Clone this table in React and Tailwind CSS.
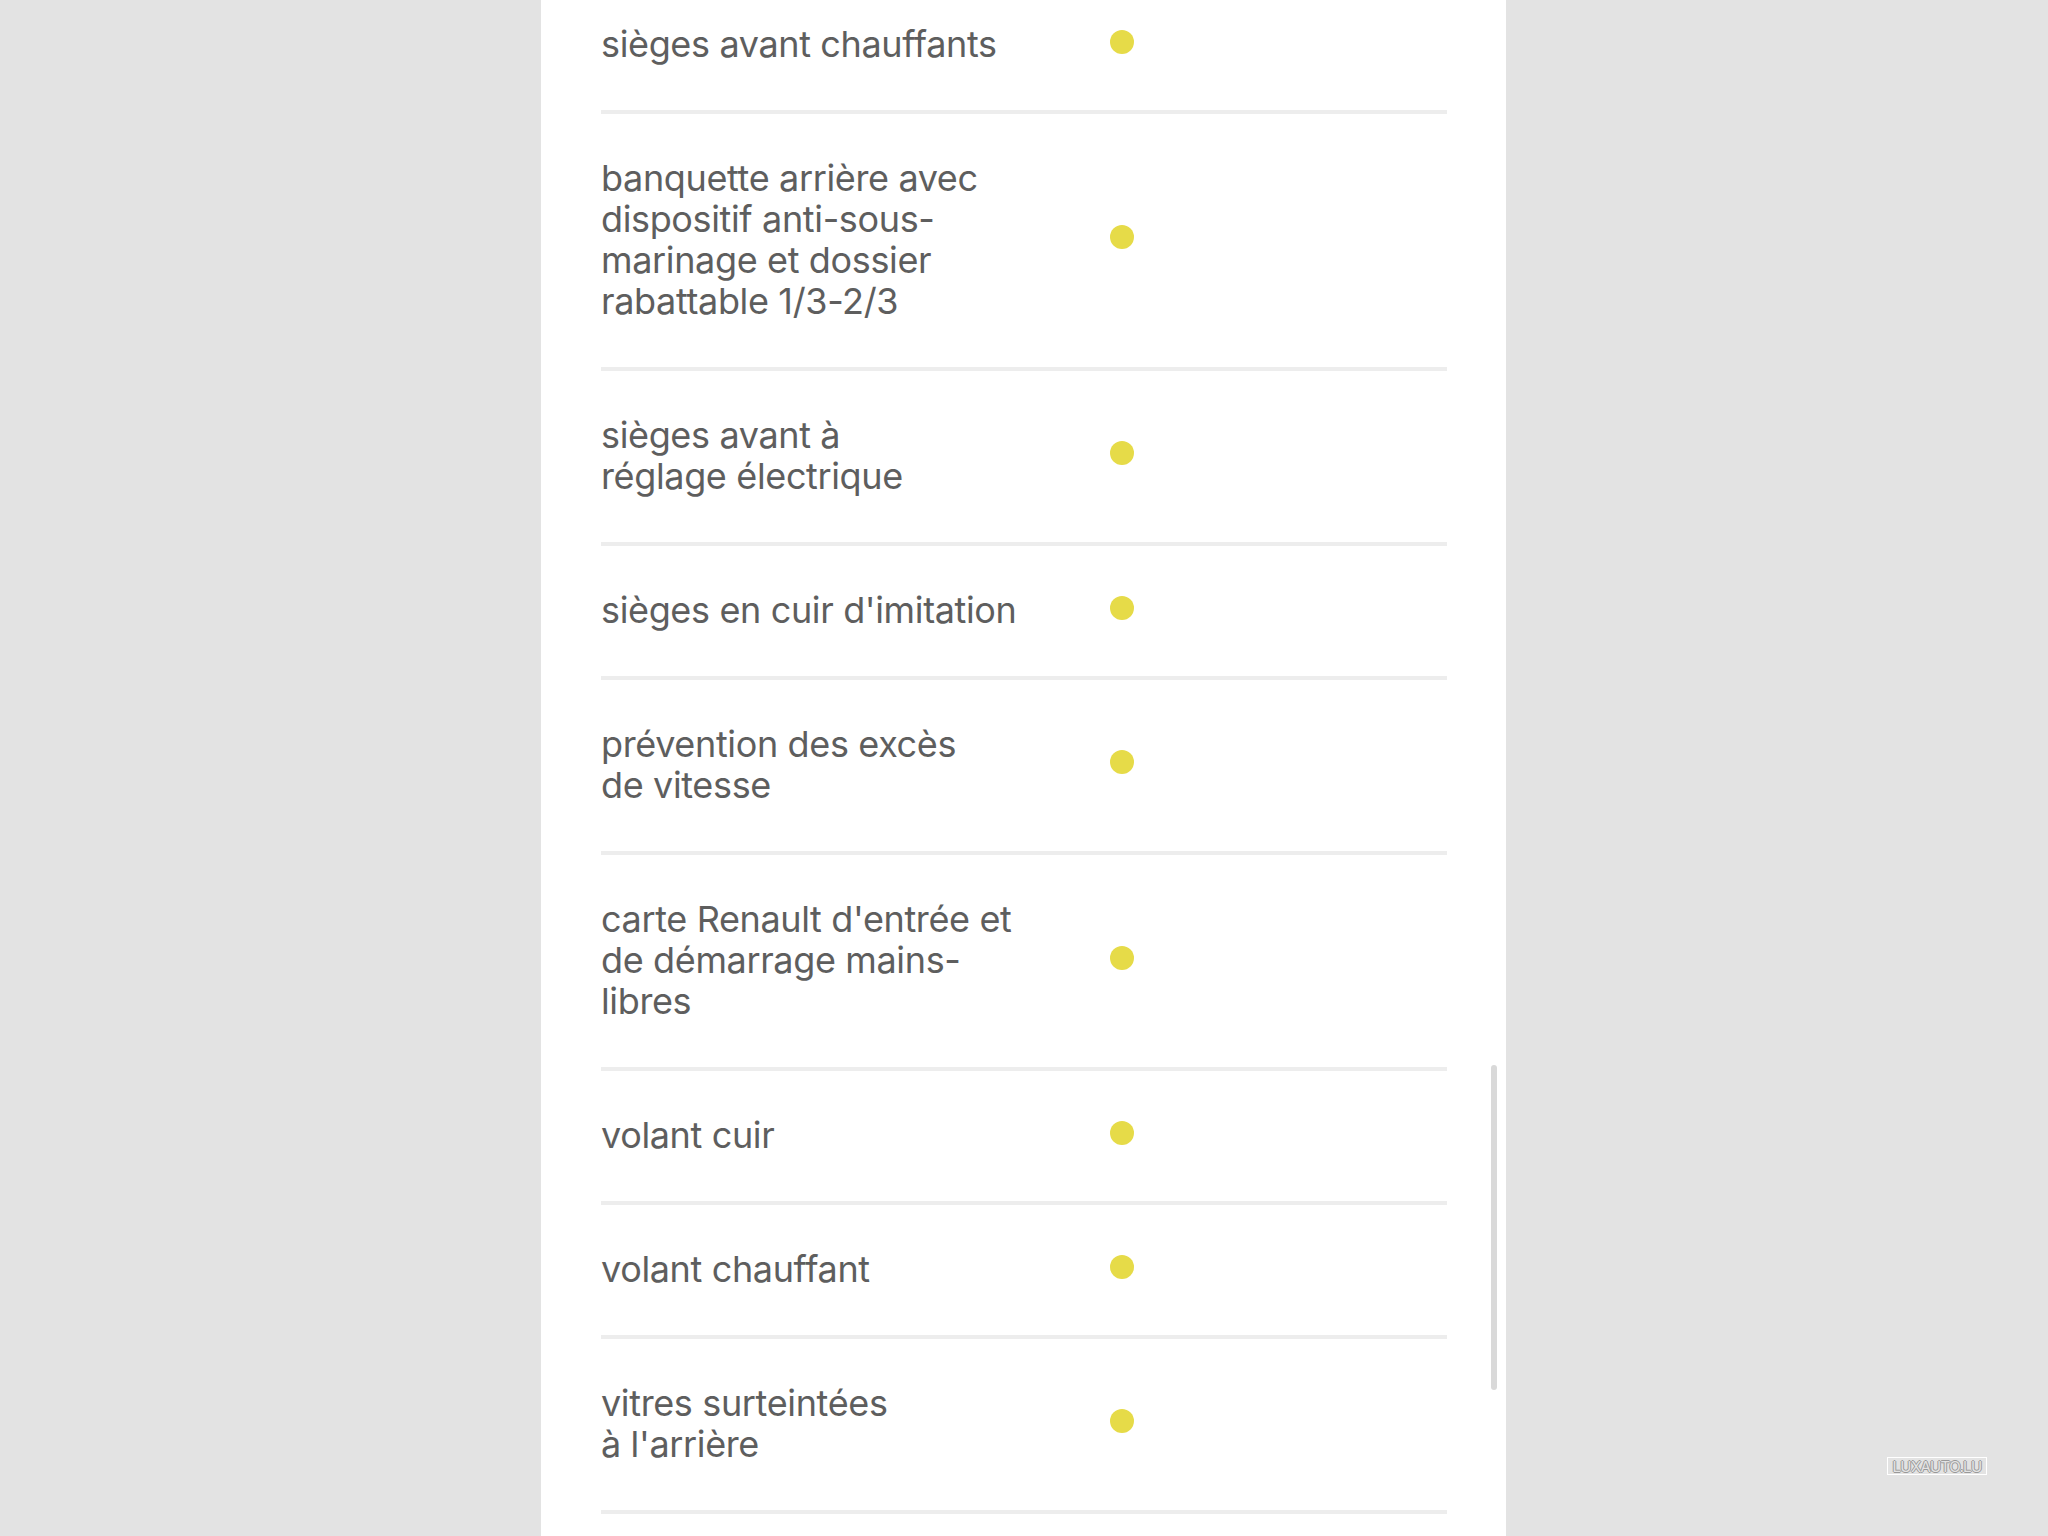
import React from "react";

const rows = [
  ["sièges avant chauffants"],
  ["banquette arrière avec", "dispositif anti-sous-", "marinage et dossier", "rabattable 1/3-2/3"],
  ["sièges avant à", "réglage électrique"],
  ["sièges en cuir d'imitation"],
  ["prévention des excès", "de vitesse"],
  ["carte Renault d'entrée et", "de démarrage mains-", "libres"],
  ["volant cuir"],
  ["volant chauffant"],
  ["vitres surteintées", "à l'arrière"],
];

function Row({ lines }) {
  return (
    <div className="border-b-4 border-[#ededed]">
      <div className="flex items-center pt-[44px] pb-[45px]">
        <div className="w-[509px] shrink-0 text-[36px] leading-[41px] tracking-[-0.01em] text-[#5e5e5e]">
          {lines.map((l, i) => (
            <div key={i} className="whitespace-nowrap">{l}</div>
          ))}
        </div>
        <div className="w-[24px] h-[24px] rounded-full bg-[#e6db48] -translate-y-[3px]" />
      </div>
    </div>
  );
}

export default function App() {
  return (
    <div
      className="relative h-[1536px] w-[2048px] overflow-hidden bg-[#e3e3e3]"
      style={{ fontFamily: "Inter, 'Noto Sans', sans-serif" }}
    >
      <div className="ml-[541px] flex h-full w-[965px] flex-col bg-white">
        <div className="-mt-[20px] pl-[60px] pr-[59px]">
          {rows.map((r, i) => (
            <Row key={i} lines={r} />
          ))}
        </div>
      </div>
      <div className="absolute left-[1491px] top-[1065px] h-[325px] w-[6px] rounded-full bg-[#d9d9d9]" />
      <div className="absolute left-[1887px] top-[1457px] flex h-[18px] w-[100px] items-center justify-center border border-white text-[15px] leading-none tracking-[-0.04em] text-[#e3e3e3] [text-shadow:1px_0_0_#999,-1px_0_0_#999,0_1px_0_#999,0_-1px_0_#999]">
        LUXAUTO.LU
      </div>
    </div>
  );
}
